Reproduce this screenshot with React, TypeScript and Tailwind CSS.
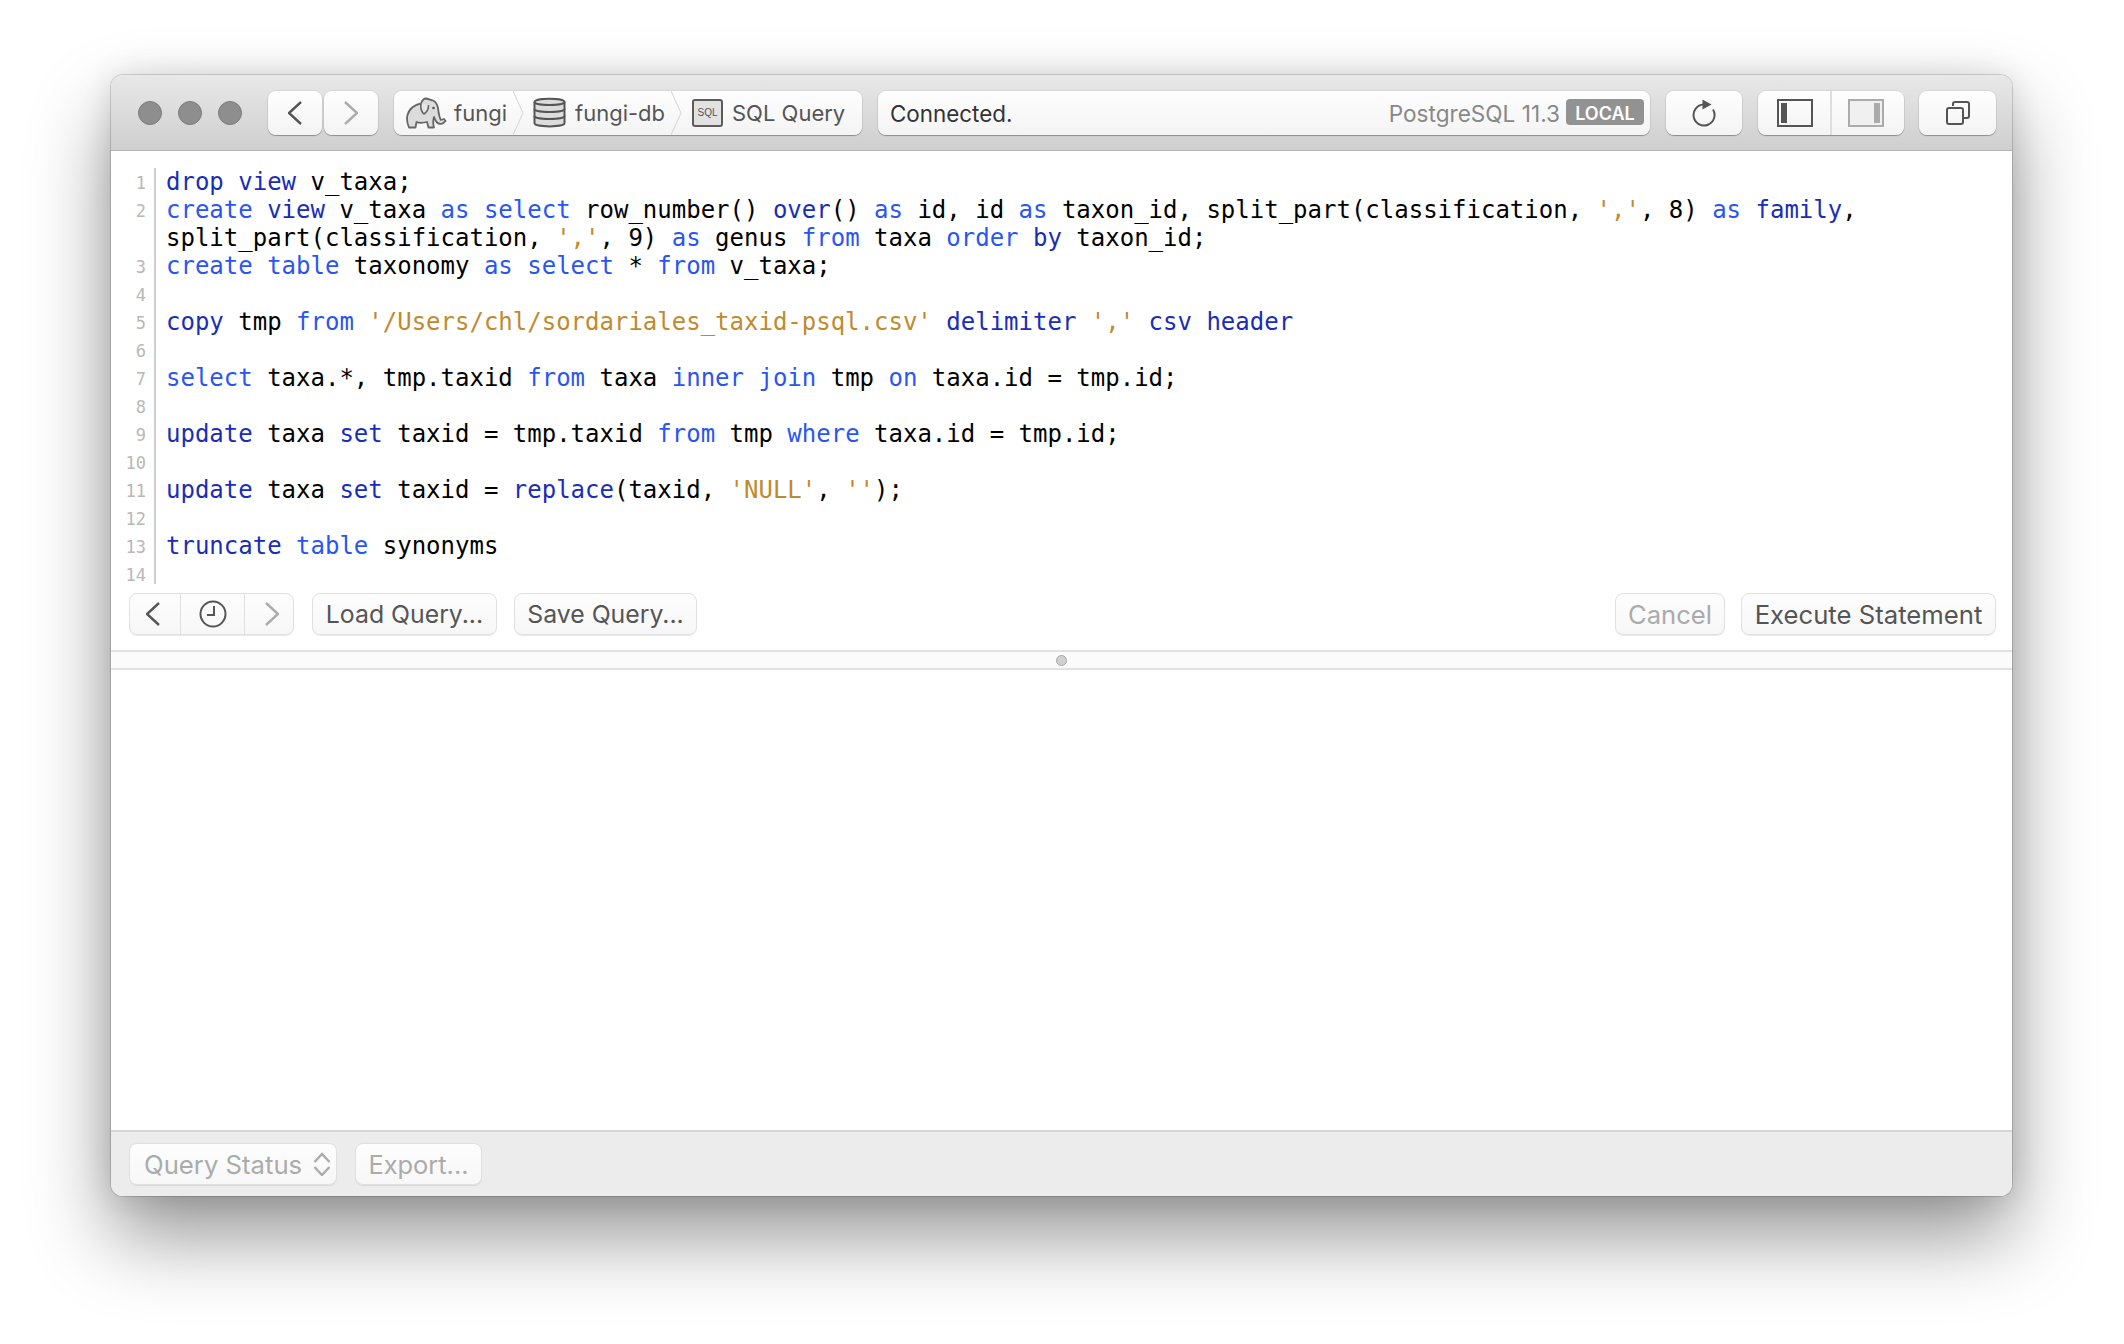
import { ReactNode } from 'react';

type Token = [string, 'k' | 'd' | 's' | 'p'];

const tokenClass = {
  k: 'text-[#2a55f5]',
  d: 'text-[#1a2db8]',
  s: 'text-[#c08a2e]',
  p: 'text-black',
};

const codeLines: Token[][] = [
  [['drop view', 'd'], [' v_taxa;', 'p']],
  [
    ['create', 'k'], [' ', 'p'], ['view', 'd'], [' v_taxa ', 'p'], ['as select', 'k'], [' row_number() ', 'p'], ['over', 'd'], ['() ', 'p'],
    ['as', 'k'], [' id, id ', 'p'], ['as', 'k'], [' taxon_id, split_part(classification, ', 'p'], ["','", 's'], [', 8) ', 'p'], ['as', 'k'], [' ', 'p'], ['family', 'd'], [', ', 'p'],
    ['split_part(classification, ', 'p'], ["','", 's'], [', 9) ', 'p'], ['as', 'k'], [' genus ', 'p'], ['from', 'k'], [' taxa ', 'p'], ['order', 'k'], [' ', 'p'], ['by', 'd'], [' taxon_id;', 'p'],
  ],
  [['create table', 'k'], [' taxonomy ', 'p'], ['as select', 'k'], [' * ', 'p'], ['from', 'k'], [' v_taxa;', 'p']],
  [],
  [['copy', 'd'], [' tmp ', 'p'], ['from', 'k'], [' ', 'p'], ["'/Users/chl/sordariales_taxid-psql.csv'", 's'], [' ', 'p'], ['delimiter', 'd'], [' ', 'p'], ["','", 's'], [' ', 'p'], ['csv header', 'd']],
  [],
  [['select', 'k'], [' taxa.*, tmp.taxid ', 'p'], ['from', 'k'], [' taxa ', 'p'], ['inner join', 'k'], [' tmp ', 'p'], ['on', 'k'], [' taxa.id = tmp.id;', 'p']],
  [],
  [['update', 'd'], [' taxa ', 'p'], ['set', 'd'], [' taxid = tmp.taxid ', 'p'], ['from', 'k'], [' tmp ', 'p'], ['where', 'k'], [' taxa.id = tmp.id;', 'p']],
  [],
  [['update', 'd'], [' taxa ', 'p'], ['set', 'd'], [' taxid = ', 'p'], ['replace', 'd'], ['(taxid, ', 'p'], ["'NULL'", 's'], [', ', 'p'], ["''", 's'], [');', 'p']],
  [],
  [['truncate', 'd'], [' ', 'p'], ['table', 'k'], [' synonyms', 'p']],
  [],
];

const raised = 'bg-gradient-to-b from-[#fefefe] to-[#f4f4f4] rounded-[8px] shadow-[0_0_0_1px_rgba(0,0,0,0.05),0_1px_1px_rgba(0,0,0,0.3)]';
const outlined = 'bg-gradient-to-b from-[#fdfdfd] to-[#f7f7f7] rounded-[8px] border border-[#e0e0e0] shadow-[0_1px_0_rgba(0,0,0,0.08)]';

function Chevron({ dir, color, w = 14, h = 24 }: { dir: 'left' | 'right'; color: string; w?: number; h?: number }) {
  const points = dir === 'left' ? `${w - 1},1 1,${h / 2} ${w - 1},${h - 1}` : `1,1 ${w - 1},${h / 2} 1,${h - 1}`;
  return (
    <svg width={w} height={h} viewBox={`0 0 ${w} ${h}`} fill="none">
      <polyline points={points} stroke={color} strokeWidth="2.4" />
    </svg>
  );
}

function Crumb() {
  return (
    <svg width="11" height="44" viewBox="0 0 11 44" fill="none" className="shrink-0">
      <polyline points="0,0 10,22 0,44" stroke="#d4d4d4" strokeWidth="1" />
    </svg>
  );
}

function Elephant() {
  return (
    <svg width="41" height="32" viewBox="0 0 41 32" fill="none" className="shrink-0">
      <path
        d="M5 30.5 L3 30.5 C1 26 0.5 22 1.5 18 C3 11.5 9 7.5 15 6.5 C16 3.5 18 1.5 20 1.5 C23 2 25 3 27 3.5 C30 5 31.5 8 32 11 C32.5 15 33 20 35 23 L38 22 L39.5 24 C37 27.5 33 27.5 31 25.5 C29.5 24 28.5 21.5 28 20 C27 23 27 27 28 30.5 L22.5 30.5 L21 25 C17 26 13 26 10.5 25 L9.5 30.5 Z"
        fill="#dcdcdc"
        stroke="#666"
        strokeWidth="1.8"
        strokeLinejoin="round"
      />
      <path d="M15 6.5 C14.5 10 15 14.5 18 17 C20.5 15.5 22.5 13 22.5 8" fill="#e8e8e8" stroke="#666" strokeWidth="1.6" />
      <circle cx="27.5" cy="11" r="1.3" fill="#555" />
    </svg>
  );
}

function Database() {
  return (
    <svg width="33" height="31" viewBox="0 0 33 31" fill="none" className="shrink-0">
      <path d="M1.5 5 C1.5 0.5 31.5 0.5 31.5 5 L31.5 26 C31.5 30.5 1.5 30.5 1.5 26 Z" fill="#dcdcdc" stroke="#555" strokeWidth="2" />
      <path d="M1.5 5 C1.5 9 31.5 9 31.5 5 M1.5 12 C1.5 16 31.5 16 31.5 12 M1.5 19 C1.5 23 31.5 23 31.5 19" stroke="#555" strokeWidth="2" />
    </svg>
  );
}

function SqlIcon() {
  return (
    <div className="w-[31px] h-[28px] shrink-0 rounded-[3px] border-2 border-[#5c5c5c] bg-[#e2e2e2] flex items-center justify-center text-[10px] leading-none text-[#555] font-['Liberation_Sans',sans-serif]">
      SQL
    </div>
  );
}

function TitleButton({ children, className }: { children: ReactNode; className: string }) {
  return <div className={`${raised} h-[44px] flex items-center justify-center shrink-0 ${className}`}>{children}</div>;
}

function PanelIcon({ side, color }: { side: 'left' | 'right'; color: string }) {
  return (
    <svg width="36" height="28" viewBox="0 0 36 28" fill="none">
      <rect x="1" y="1" width="34" height="26" stroke={color} strokeWidth="2" fill={side === 'right' ? '#f0f0f0' : 'none'} />
      <rect x={side === 'left' ? 4 : 26} y="4" width="6" height="20" fill={color} />
    </svg>
  );
}

function OutlineButton({ children, className, dim }: { children: ReactNode; className: string; dim?: boolean }) {
  return (
    <div className={`${outlined} h-[42px] pt-[2px] flex items-center justify-center shrink-0 ${dim ? 'text-[#ababab]' : 'text-[#555]'} ${className}`}>
      {children}
    </div>
  );
}

export default function App() {
  return (
    <div className="w-[2124px] h-[1344px] bg-white pt-[75px] pl-[111px] font-['Inter',sans-serif]">
      <div className="w-[1901px] h-[1121px] rounded-[12px] overflow-hidden flex flex-col bg-white shadow-[0_0_0_1px_rgba(0,0,0,0.14),0_0_30px_rgba(0,0,0,0.12),0_40px_80px_rgba(0,0,0,0.42)]">
        {/* title bar */}
        <div className="h-[76px] shrink-0 flex items-center pl-[27px] bg-gradient-to-b from-[#e8e8e8] to-[#cfcfcf] border-b border-[#b4b4b4]">
          <div className="flex gap-[16px] shrink-0">
            <div className="w-[24px] h-[24px] rounded-full bg-[#8e8e8e] border border-[#7c7c7c]" />
            <div className="w-[24px] h-[24px] rounded-full bg-[#8e8e8e] border border-[#7c7c7c]" />
            <div className="w-[24px] h-[24px] rounded-full bg-[#8e8e8e] border border-[#7c7c7c]" />
          </div>
          <TitleButton className="w-[54px] ml-[26px]">
            <Chevron dir="left" color="#555" />
          </TitleButton>
          <TitleButton className="w-[54px] ml-[2px]">
            <Chevron dir="right" color="#ababab" />
          </TitleButton>

          <div className={`${raised} h-[44px] w-[468px] ml-[16px] shrink-0 flex items-center pl-[12px] text-[22px] text-[#555]`}>
            <Elephant />
            <span className="ml-[7px] w-[59px] pt-[2px]">fungi</span>
            <Crumb />
            <div className="ml-[9px]"><Database /></div>
            <span className="ml-[9px] w-[96px] pt-[2px] whitespace-nowrap">fungi-db</span>
            <Crumb />
            <div className="ml-[10px]"><SqlIcon /></div>
            <span className="ml-[9px] pt-[2px] whitespace-nowrap">SQL Query</span>
          </div>

          <div className={`${raised} h-[44px] w-[772px] ml-[16px] shrink-0 flex items-center justify-between pl-[12px] pr-[6px]`}>
            <span className="text-[22.4px] pt-[2px] text-[#333]">Connected.</span>
            <div className="flex items-center gap-[6px]">
              <span className="text-[22.6px] pt-[2px] text-[#888]">PostgreSQL 11.3</span>
              <span className="w-[78px] h-[26px] pt-[2px] rounded-[4px] bg-[#929292] flex items-center justify-center text-[18px] font-semibold text-white">LOCAL</span>
            </div>
          </div>

          <TitleButton className="w-[76px] ml-[16px] pl-[2px]">
            <svg width="26" height="28" viewBox="0 0 26 28" fill="none">
              <path d="M21 10.5 A10.5 10.5 0 1 1 11.5 5.5" stroke="#555" strokeWidth="2" />
              <polygon points="10.5,0.5 19.5,5.5 10.5,10.5" fill="#555" />
            </svg>
          </TitleButton>

          <TitleButton className="w-[146px] ml-[16px]">
            <div className="flex-1 h-full pl-[2px] flex items-center justify-center border-r-2 border-[#dedede]">
              <PanelIcon side="left" color="#555" />
            </div>
            <div className="flex-1 h-full pr-[3px] flex items-center justify-center">
              <PanelIcon side="right" color="#ababab" />
            </div>
          </TitleButton>

          <TitleButton className="w-[77px] ml-[15px]">
            <svg width="24" height="24" viewBox="0 0 24 24" fill="none">
              <path d="M7 5 V3 Q7 1 9 1 H21 Q23 1 23 3 V15 Q23 17 21 17 H18" stroke="#555" strokeWidth="2" />
              <rect x="1" y="7" width="16" height="16" rx="2" stroke="#555" strokeWidth="2" />
            </svg>
          </TitleButton>
        </div>

        {/* editor */}
        <div className="pt-[17px] shrink-0 bg-white">
          <div className="h-[416px] overflow-hidden">
            {codeLines.map((line, i) => (
              <div key={i} className="flex text-[24px] leading-[28px] font-['DejaVu_Sans_Mono',monospace]">
                <div className="w-[43px] shrink-0 box-content border-r-2 border-[#cfcfcf] text-right">
                  <span className="block pt-[6px] pr-[8px] text-[17px] leading-[18px] text-[#b8b8b8]">{i + 1}</span>
                </div>
                <div className="pl-[10px] min-h-[28px] w-[1830px] whitespace-pre-wrap">
                  {line.map(([text, kind], j) => (
                    <span key={j} className={tokenClass[kind]}>{text}</span>
                  ))}
                </div>
              </div>
            ))}
          </div>
        </div>

        {/* query toolbar */}
        <div className="h-[66px] shrink-0 pt-[9px] pl-[18px] pr-[16px] flex items-start">
          <div className={`${outlined} w-[165px] h-[42px] flex shrink-0`}>
            <div className="w-[51px] pr-[4px] flex items-center justify-center border-r border-[#e0e0e0]">
              <Chevron dir="left" color="#555" />
            </div>
            <div className="w-[64px] flex items-center justify-center border-r border-[#e0e0e0]">
              <svg width="28" height="28" viewBox="0 0 28 28" fill="none">
                <circle cx="14" cy="14" r="12.5" stroke="#555" strokeWidth="2" />
                <path d="M15 6 V15 H8" stroke="#555" strokeWidth="2" />
              </svg>
            </div>
            <div className="flex-1 pl-[5px] flex items-center justify-center">
              <Chevron dir="right" color="#ababab" />
            </div>
          </div>
          <OutlineButton className="w-[185px] ml-[18px] text-[24.8px]">Load Query...</OutlineButton>
          <OutlineButton className="w-[183px] ml-[17px] text-[24.8px]">Save Query...</OutlineButton>
          <div className="flex-1" />
          <OutlineButton className="w-[110px] -ml-[1px] text-[25.6px]" dim>Cancel</OutlineButton>
          <OutlineButton className="w-[255px] ml-[16px] text-[25.7px]">Execute Statement</OutlineButton>
        </div>

        {/* splitter */}
        <div className="h-[20px] shrink-0 bg-[#fbfbfb] border-y-2 border-[#e2e2e2] flex items-center justify-center">
          <div className="w-[11px] h-[11px] rounded-full bg-[#cfcfcf] border border-[#a8a8a8]" />
        </div>

        {/* results */}
        <div className="flex-1 bg-white" />

        {/* status bar */}
        <div className="h-[66px] shrink-0 bg-[#ececec] border-t-2 border-[#d6d6d6] pt-[11px] pl-[18px] flex items-start">
          <OutlineButton className="w-[208px] pl-[14px] pr-[5px] !justify-between text-[25.7px]" dim>
            <span className="whitespace-nowrap">Query Status</span>
            <svg width="18" height="24" viewBox="0 0 18 24" fill="none" className="shrink-0 -mt-[2px]">
              <polyline points="1.5,10 9,2 16.5,10" stroke="#ababab" strokeWidth="2.4" />
              <polyline points="1.5,15 9,23 16.5,15" stroke="#ababab" strokeWidth="2.4" />
            </svg>
          </OutlineButton>
          <OutlineButton className="w-[127px] ml-[18px] text-[25.4px]" dim>Export...</OutlineButton>
        </div>
      </div>
    </div>
  );
}
